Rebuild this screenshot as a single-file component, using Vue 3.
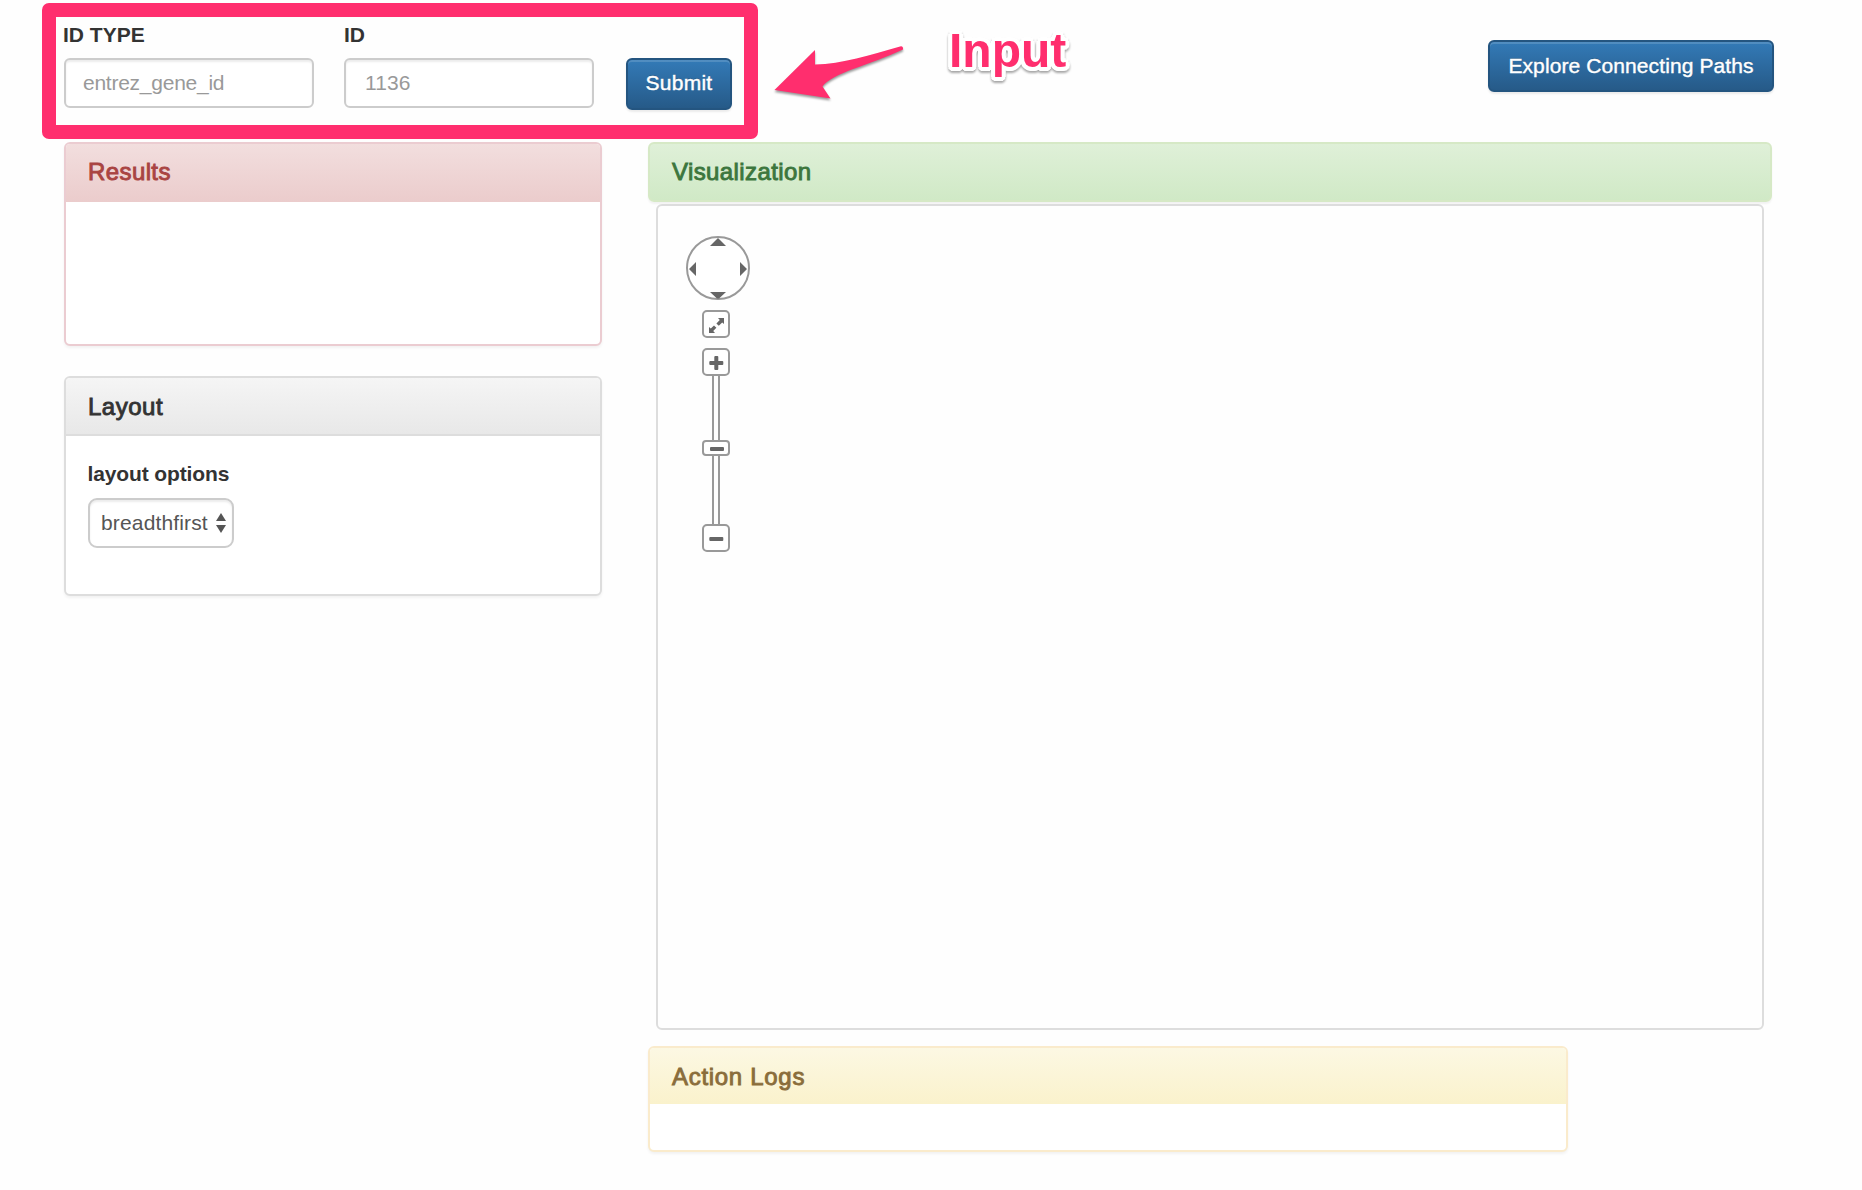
<script setup>
import { ref } from 'vue'

const idType = ref('')
const id = ref('')
const layout = 'breadthfirst'
</script>

<template>
  <div class="page">
    <header class="toolbar">
      <form class="query" @submit.prevent>
        <div class="field">
          <label for="id-type">ID TYPE</label>
          <input id="id-type" v-model="idType" type="text" placeholder="entrez_gene_id" />
        </div>
        <div class="field second">
          <label for="id-value">ID</label>
          <input id="id-value" v-model="id" type="text" placeholder="1136" />
        </div>
        <button class="btn submit" type="submit">Submit</button>
      </form>
      <button class="btn explore" type="button">Explore Connecting Paths</button>
    </header>

    <main class="columns">
      <div class="side">
        <section class="panel danger">
          <h3>Results</h3>
        </section>
        <section class="panel plain">
          <h3>Layout</h3>
          <div class="options">
            <div class="options-label">layout options</div>
            <div class="select">
              <span>{{ layout }}</span>
              <svg width="10" height="20" viewBox="0 0 10 20">
                <path d="M5 0 10 8H0zM0 12h10L5 20z" fill="#555" />
              </svg>
            </div>
          </div>
        </section>
      </div>

      <div class="content">
        <section class="success"><h3>Visualization</h3></section>
        <div class="graph">
          <div class="panzoom">
            <svg class="panner" width="64" height="64" viewBox="0 0 64 64">
              <circle cx="32" cy="32" r="31" fill="#fff" stroke="#999" stroke-width="2" />
              <path d="M32 2 40 10H24zM3 33 10 26v14zM61 33 54 26v14zM24 56h16l-7 6.5h-2z" fill="#666" />
            </svg>
            <div class="tool reset">
              <svg width="24" height="24" viewBox="0 0 24 24" fill="#666">
                <path d="M14 6h6v6l-1.800-1.600-3.400 3.400-2.400-2.400 3.400-3.400zM5 15l1.800 1.600 3.200-3.200 2.400 2.400-3.200 3.200L11 21H5z" />
              </svg>
            </div>
            <div class="tool">
              <svg width="24" height="24" viewBox="0 0 24 24" fill="#666">
                <rect x="5.300" y="11" width="14" height="4" rx="1" />
                <rect x="10.300" y="6" width="4" height="14" rx="1" />
              </svg>
            </div>
            <div class="track"><div class="handle"><i></i></div></div>
            <div class="tool">
              <svg width="24" height="24" viewBox="0 0 24 24" fill="#666">
                <rect x="5.300" y="11" width="14" height="4" rx="1" />
              </svg>
            </div>
          </div>
        </div>
        <section class="panel warning">
          <h3>Action Logs</h3>
        </section>
      </div>
    </main>

    <div class="highlight"></div>
    <svg class="arrow" width="150" height="70" viewBox="765 40 150 70">
      <path d="M774.500 90 815 50V64.500C842 64 870 55 901 46.200Q903.500 46.500 903 49.500C870 65 832 73 822.500 86.500L830.500 98.500Z" fill="#ff2e6e" />
    </svg>
    <div class="callout">Input</div>
  </div>
</template>

<style>
body {
  background: #fefefe;
}
</style>

<style scoped>
.page,
.page * {
  box-sizing: border-box;
}
.page {
  position: relative;
  width: 1862px;
  height: 1190px;
  padding: 0 90px 0 64px;
  overflow: hidden;
  font: 21px/30px "Liberation Sans", Arial, sans-serif;
  color: #333;
}
.toolbar {
  display: flex;
  justify-content: space-between;
  height: 142px;
  margin-right: -2px;
}
.query {
  display: flex;
  padding-top: 20px;
}
.field {
  display: flex;
  flex-direction: column;
  gap: 8px;
  width: 250px;
  margin-right: 30px;
}
.field label,
.options-label {
  font-weight: bold;
}
.field label {
  margin-left: -1px;
  line-height: 29px;
  height: 30px;
}
.second label {
  margin-left: 0;
}
input {
  width: 250px;
  height: 50px;
  padding: 0 17px;
  border: 2px solid #ccc;
  border-radius: 6px;
  background: #fff;
  box-shadow: inset 0 2px 2px rgba(0, 0, 0, 0.075);
  font: inherit;
  letter-spacing: -0.25px;
}
.second input {
  padding-left: 19px;
  letter-spacing: 0.1px;
}
input::placeholder {
  color: #999;
  opacity: 1;
}
.btn {
  height: 52px;
  padding: 0;
  border: 2px solid #245580;
  border-radius: 6px;
  background: linear-gradient(#337ab7, #265a88);
  box-shadow: inset 0 2px 0 rgba(255, 255, 255, 0.15), 0 2px 2px rgba(0, 0, 0, 0.075);
  color: #fff;
  font: inherit;
  letter-spacing: 0.1px;
  -webkit-text-stroke: 0.4px #fff;
  text-shadow: 0 -1px 0 rgba(0, 0, 0, 0.2);
  white-space: nowrap;
}
.submit {
  width: 106px;
  margin: 38px 0 0 2px;
  padding-bottom: 2px;
  letter-spacing: 0.25px;
}
.explore {
  width: 286px;
  margin-top: 40px;
}
.columns {
  display: flex;
  gap: 46px;
}
.side {
  width: 538px;
}
.content {
  width: 1124px;
}
.panel {
  border: 2px solid #ddd;
  border-radius: 6px;
  background: #fff;
  box-shadow: 0 2px 3px rgba(0, 0, 0, 0.05);
}
h3 {
  margin: 0;
  padding: 0 22px;
  border-radius: 4px 4px 0 0;
  font-size: 24px;
  font-weight: normal;
  letter-spacing: 0.4px;
  -webkit-text-stroke: 0.9px currentColor;
}
.danger {
  height: 204px;
  margin-bottom: 30px;
  border-color: #ebccd1;
}
.danger h3 {
  height: 58px;
  line-height: 56px;
  color: #a94442;
  background: linear-gradient(#f2dede, #ebcccc);
}
.plain {
  height: 220px;
}
.plain h3 {
  height: 58px;
  line-height: 58px;
  letter-spacing: 0.5px;
  border-bottom: 2px solid #ddd;
  background: linear-gradient(#f5f5f5, #e8e8e8);
}
.options {
  padding: 23px 22px;
}
.options-label {
  margin: 0 0 9px -0.5px;
  letter-spacing: -0.12px;
}
.select {
  display: flex;
  align-items: center;
  justify-content: space-between;
  width: 146px;
  height: 50px;
  padding: 0 6px 0 11px;
  border: 2px solid #ccc;
  border-radius: 9px;
  box-shadow: inset 0 2px 2px rgba(0, 0, 0, 0.075);
  color: #555;
}
.select span {
  margin-top: -1px;
  letter-spacing: 0.15px;
  font-variant-ligatures: none;
}
.success {
  height: 60px;
  border: 2px solid #d6e9c6;
  border-radius: 6px;
  background: linear-gradient(#dff0d8, #d0e9c6);
  box-shadow: 0 2px 2px rgba(0, 0, 0, 0.05);
  color: #3c763d;
}
.success h3 {
  line-height: 56px;
}
.graph {
  height: 826px;
  margin: 2px 8px 16px;
  padding: 30px 28px;
  border: 2px solid #ddd;
  border-radius: 6px;
  background: #fefefe;
}
.panzoom {
  display: flex;
  flex-direction: column;
  align-items: center;
  width: 60px;
}
.panner {
  flex: none;
  margin: 0 -4px 10px 0;
}
.tool {
  width: 28px;
  height: 28px;
  border: 2px solid #999;
  border-radius: 5px;
  background: #fff;
}
.tool svg {
  display: block;
}
.reset {
  margin-bottom: 10px;
}
.track {
  display: flex;
  justify-content: center;
  width: 8px;
  height: 148px;
  padding-top: 64px;
  border: solid #999;
  border-width: 0 2px;
}
.handle {
  display: flex;
  flex: none;
  align-items: center;
  justify-content: center;
  width: 28px;
  height: 16px;
  padding: 2px 0 0 2px;
  border: 2px solid #999;
  border-radius: 4px;
  background: #fff;
}
.handle i {
  width: 14px;
  height: 4px;
  border-radius: 1px;
  background: #666;
}
.warning {
  width: 920px;
  height: 106px;
  border-color: #faebcc;
}
.warning h3 {
  height: 56px;
  line-height: 58px;
  letter-spacing: 0.7px;
  color: #8a6d3b;
  background: linear-gradient(#fcf8e3, #faf2cc);
}
.highlight {
  position: absolute;
  top: 3px;
  left: 42px;
  width: 716px;
  height: 136px;
  border: 14px solid #ff2e6e;
  border-radius: 7px;
  pointer-events: none;
}
.arrow {
  position: absolute;
  top: 40px;
  left: 765px;
  filter: drop-shadow(0 2px 1px rgba(0, 0, 0, 0.4));
}
.callout {
  position: absolute;
  top: 20px;
  left: 949px;
  color: #ff2e6e;
  font-size: 48px;
  font-weight: bold;
  line-height: 61px;
  text-shadow: 4px 0 #fff, -4px 0 #fff, 0 4px #fff, 0 -4px #fff,
    2.8px 2.8px #fff, -2.8px 2.8px #fff, 2.8px -2.8px #fff, -2.8px -2.8px #fff,
    3.7px 1.5px #fff, -3.7px 1.5px #fff, 1.5px 3.7px #fff, -1.5px 3.7px #fff;
  filter: drop-shadow(0 2px 1px rgba(0, 0, 0, 0.35));
}
</style>
